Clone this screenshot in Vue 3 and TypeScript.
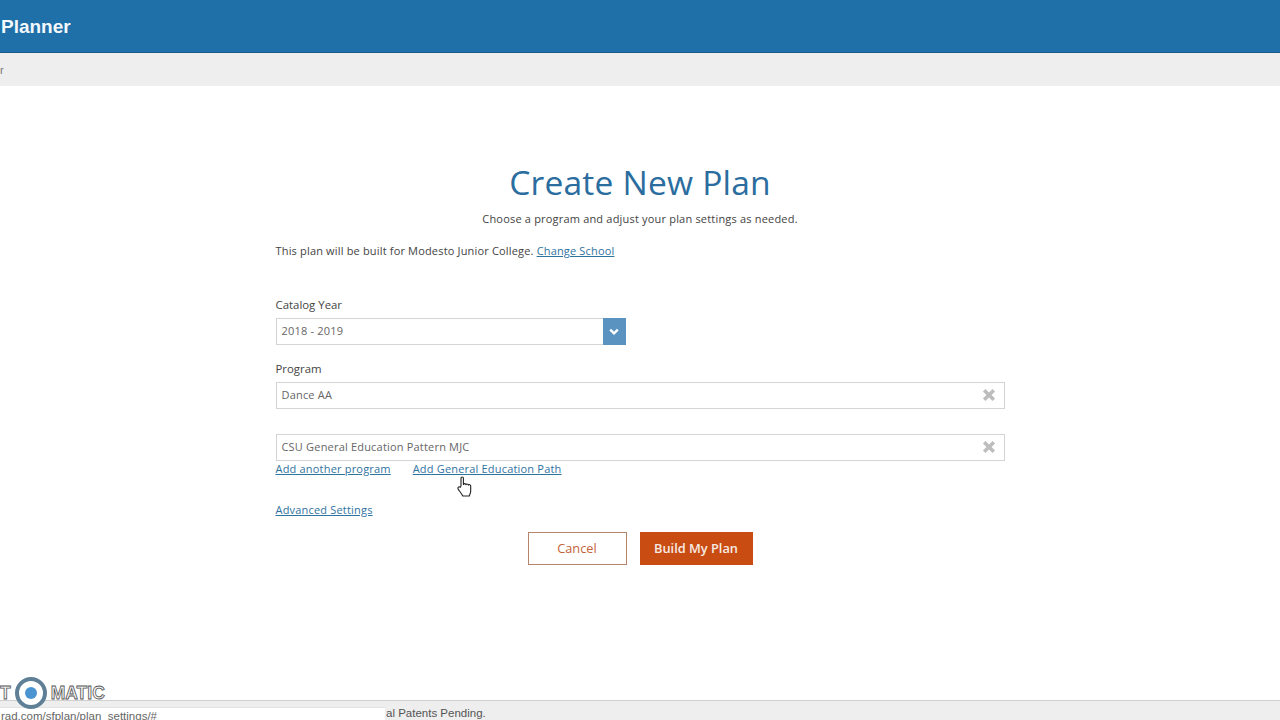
<script setup lang="ts">
const programs = ["Dance AA", "CSU General Education Pattern MJC"];
</script>

<template>
  <div class="page">
    <header class="topbar">
      <span class="brand">Planner</span>
    </header>
    <div class="subbar"><span class="crumb">r</span></div>

    <main class="content">
      <h1 class="title">Create New Plan</h1>
      <p class="intro">Choose a program and adjust your plan settings as needed.</p>

      <form class="plan-form" @submit.prevent>
        <p class="school">
          This plan will be built for Modesto Junior College.
          <a href="#">Change School</a>
        </p>

        <label class="field-label year-label">Catalog Year</label>
        <div class="select">
          <span class="value">2018 - 2019</span>
          <span class="select-btn">
            <svg width="10" height="8" viewBox="0 0 10 8">
              <path d="M1.2 1.6 5 5.4l3.8-3.8" fill="none" stroke="#fff" stroke-width="2.4" />
            </svg>
          </span>
        </div>

        <label class="field-label program-label">Program</label>
        <div class="programs">
          <div v-for="name in programs" :key="name" class="token">
            <span class="value">{{ name }}</span>
            <svg class="clear" width="14" height="14" viewBox="0 0 14 14">
              <path d="M2.2 2.2l9.6 9.6M11.8 2.2l-9.6 9.6" fill="none" stroke="#bdbdbd" stroke-width="3.6" />
            </svg>
          </div>
        </div>

        <div class="add-links">
          <a href="#">Add another program</a>
          <a href="#">Add General Education Path</a>
        </div>

        <a class="advanced" href="#">Advanced Settings</a>

        <div class="actions">
          <button class="btn btn-cancel" type="button">Cancel</button>
          <button class="btn btn-build" type="submit">Build My Plan</button>
        </div>
      </form>
    </main>

    <footer class="footer"><span class="legal">al Patents Pending.</span></footer>

    <!-- things from the screen recording that sit over the page -->
    <div class="status-url">rad.com/sfplan/plan_settings/#</div>
    <div class="watermark">
      <span>T</span>
      <span class="ring"><span class="dot"></span></span>
      <span>MATIC</span>
    </div>
    <svg class="cursor" width="20" height="24" viewBox="0 0 20 24">
      <path
        d="M6 11V3.2c0-1.6 2.4-1.6 2.4 0V9.500c.3-1.200 2.300-1.200 2.500.2.400-1.100 2.300-1 2.500.4.500-.9 2.300-.6 2.300 1v4.900c0 2.200-.8 3.200-1.400 5H7.800C6.800 19 4.800 16.500 3.300 14.400 2 12.500 4 11 5.200 12.300z"
        fill="#fff"
        stroke="#222"
        stroke-width="1.100"
        stroke-linejoin="round"
      />
    </svg>
  </div>
</template>

<style>
html,
body {
  margin: 0;
  background: #fff;
}
</style>

<style scoped>
.page {
  position: relative;
  width: 1280px;
  height: 720px;
  overflow: hidden;
  display: flex;
  flex-direction: column;
  font-family: "Open Sans", sans-serif;
  color: #444;
}

.topbar {
  height: 52px;
  flex: none;
  background: #1f6fa8;
  border-bottom: 1px solid #195a88;
  display: flex;
  align-items: center;
  padding-left: 1px;
}
.brand {
  margin-top: 2px;
  font-family: "Liberation Sans", Arial, sans-serif;
  font-size: 19px;
  font-weight: 700;
  color: #f2f8fc;
}

.subbar {
  height: 33px;
  flex: none;
  background: #eeeeee;
  display: flex;
  align-items: center;
}
.crumb {
  font-family: "Liberation Sans", Arial, sans-serif;
  font-size: 11px;
  color: #777;
}

.content {
  flex: 1;
  display: flex;
  flex-direction: column;
  align-items: center;
}
.title {
  margin: 74px 0 0;
  font-size: 33.6px;
  line-height: 45px;
  font-weight: 400;
  color: #2a6d9e;
  letter-spacing: 0.2px;
}
.intro {
  margin: 6px 0 0;
  font-size: 11px;
  line-height: 16px;
  letter-spacing: 0.19px;
}

.plan-form {
  width: 729px;
  display: flex;
  flex-direction: column;
  align-items: flex-start;
  font-size: 11px;
  letter-spacing: 0.19px;
}
.school {
  margin: 16px 0 0;
  line-height: 16px;
  letter-spacing: 0.17px;
}
a {
  color: #2f739f;
  text-decoration: underline;
}

.field-label {
  font-size: 11.4px;
  line-height: 16px;
  letter-spacing: 0;
}
.year-label {
  margin-top: 38px;
}
.program-label {
  margin-top: 16px;
}

.select {
  width: 350px;
  height: 27px;
  margin-top: 5px;
  box-sizing: border-box;
  border: 1px solid #d4d4d4;
  display: flex;
  align-items: center;
  justify-content: space-between;
}
.select-btn {
  width: 23px;
  height: 27px;
  margin-right: -1px;
  background: #5b93c0;
  display: flex;
  align-items: center;
  justify-content: center;
}
.value {
  padding-left: 5px;
  margin-bottom: 2px;
  color: #666;
  line-height: 16px;
}

.programs {
  width: 100%;
  margin-top: 5px;
  display: flex;
  flex-direction: column;
  gap: 25px;
}
.token {
  height: 27px;
  box-sizing: border-box;
  border: 1px solid #d4d4d4;
  display: flex;
  align-items: center;
  justify-content: space-between;
  padding-right: 8px;
}
.clear {
  margin-bottom: 1px;
}

.add-links {
  display: flex;
  gap: 22px;
  line-height: 16px;
}
.advanced {
  margin-top: 25px;
  line-height: 16px;
}

.actions {
  align-self: center;
  display: flex;
  gap: 13px;
  margin-top: 14px;
}
.btn {
  height: 33px;
  box-sizing: border-box;
  font-family: inherit;
  font-size: 12.8px;
  padding: 0 0 2px;
}
.btn-cancel {
  width: 99px;
  background: #fff;
  border: 1px solid #b5846b;
  color: #c4633a;
}
.btn-build {
  width: 113px;
  background: #c94c12;
  border: 0;
  color: #f7ebe4;
  font-weight: 600;
}

.footer {
  height: 20px;
  flex: none;
  box-sizing: border-box;
  background: #eeeeee;
  border-top: 1px solid #cfcfcf;
  padding-left: 386px;
  font-family: "Liberation Sans", Arial, sans-serif;
  font-size: 11.5px;
  line-height: 25px;
  color: #555;
}

.status-url {
  position: absolute;
  left: 0;
  top: 707px;
  width: 385px;
  height: 13px;
  padding-left: 1px;
  background: #fff;
  border-top: 1px solid #e2e2e2;
  box-sizing: border-box;
  font-family: "Liberation Sans", Arial, sans-serif;
  font-size: 11.5px;
  line-height: 17px;
  color: #666;
}

.watermark {
  position: absolute;
  left: 0;
  top: 677px;
  display: flex;
  align-items: center;
  gap: 4px;
  font-family: "Liberation Sans", Arial, sans-serif;
  font-size: 17.5px;
  font-weight: 700;
  color: #f4f4f4;
  -webkit-text-stroke: 0.8px #555;
}
.ring {
  width: 32px;
  height: 32px;
  box-sizing: border-box;
  border-radius: 50%;
  background: #fff;
  border: 4px solid #5f7f96;
  display: flex;
  align-items: center;
  justify-content: center;
}
.dot {
  width: 12px;
  height: 12px;
  border-radius: 50%;
  background: #4a94d2;
}

.cursor {
  position: absolute;
  left: 455px;
  top: 475px;
}
</style>
